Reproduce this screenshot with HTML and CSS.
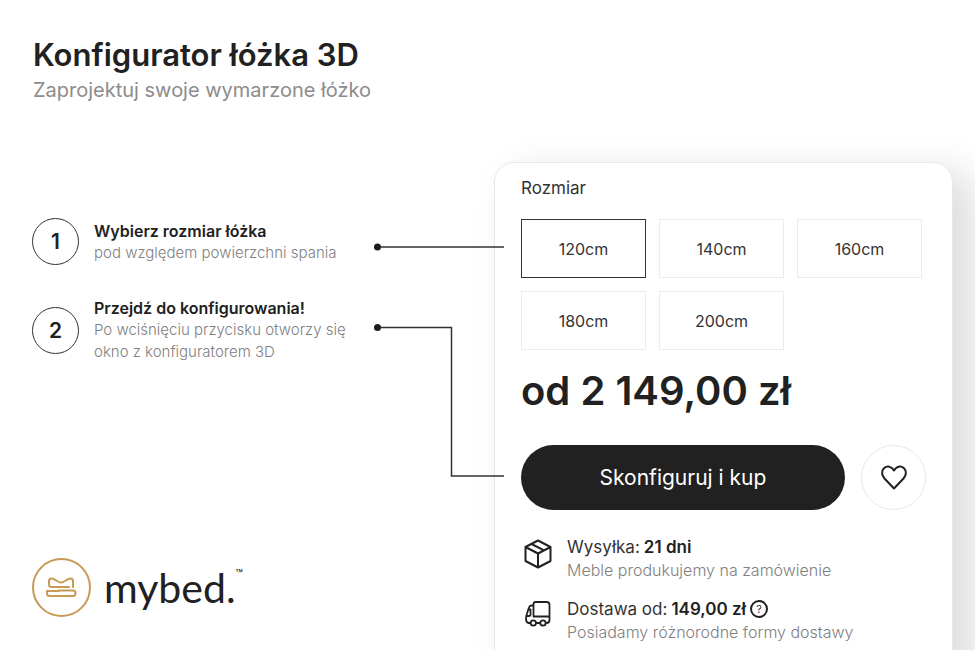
FILE: index.html
```html
<!DOCTYPE html>
<html lang="pl">
<head>
<meta charset="utf-8">
<meta name="viewport" content="width=device-width, initial-scale=1">
<title>Konfigurator łóżka 3D</title>
<link rel="stylesheet" href="styles.css">
</head>
<body>
<div class="page">
  <header class="header">
    <h1 class="title">Konfigurator łóżka 3D</h1>
    <p class="subtitle">Zaprojektuj swoje wymarzone łóżko</p>
  </header>
  <main class="content">
    <section class="guide">
      <ol class="steps">
        <li class="step">
          <span class="step-number">1</span>
          <div>
            <h2 class="step-title">Wybierz rozmiar łóżka</h2>
            <p class="step-text">pod względem powierzchni spania</p>
          </div>
        </li>
        <li class="step">
          <span class="step-number">2</span>
          <div>
            <h2 class="step-title">Przejdź do konfigurowania!</h2>
            <p class="step-text">Po wciśnięciu przycisku otworzy się<br>okno z konfiguratorem 3D</p>
          </div>
        </li>
      </ol>
      <div class="brand">
        <svg class="brand-mark" viewBox="0 0 60 60" fill="none" stroke="#c79a55" stroke-width="2" stroke-linecap="round" stroke-linejoin="round" aria-hidden="true">
          <circle cx="29.500" cy="29.500" r="28.5"/>
          <path d="M37 29H19.500Q17 29 17 26.500V23Q17 20.500 19.500 20.500C23 20.500 25.500 24.500 29 24.500C32.500 24.500 35 20.500 38.500 20.500Q41 20.500 41 23V29M27 32.500H41Q43.500 32.500 43.500 35.200Q43.500 38 41 38H17.500Q15 38 15 35.500V33H27"/>
        </svg>
        <span class="brand-name">mybed.</span><span class="brand-tm">™</span>
      </div>
    </section>
    <section class="card">
      <fieldset class="sizes">
        <legend class="sizes-label">Rozmiar</legend>
        <div class="size-grid">
          <button type="button" class="size selected" aria-pressed="true">120cm</button>
          <button type="button" class="size">140cm</button>
          <button type="button" class="size">160cm</button>
          <button type="button" class="size">180cm</button>
          <button type="button" class="size">200cm</button>
        </div>
      </fieldset>
      <p class="price">od 2 149,00 zł</p>
      <div class="actions">
        <button type="button" class="buy">Skonfiguruj i kup</button>
        <button type="button" class="favourite" aria-label="Dodaj do ulubionych">
          <svg width="28" height="26" viewBox="0 0 28 26" fill="none" stroke="#212121" stroke-width="2" stroke-linejoin="round"><path d="M14 23.500L4.500 13.500C1.500 10.200 1.300 5.800 4 3.300C7 .5 11.500 1 14 5.500C16.500 1 21 .5 24 3.300C26.700 5.800 26.500 10.200 23.500 13.500Z"/></svg>
        </button>
      </div>
      <ul class="facts">
        <li class="fact">
          <svg class="fact-icon" viewBox="0 0 28 30" fill="none" stroke="#212121" stroke-width="2" stroke-linejoin="round" aria-hidden="true"><path d="M14 1.500L26.500 8V22L14 28.500L1.500 22V8ZM1.500 8L14 14.500L26.500 8M14 14.500V28.500M7.500 5L20 11.400"/></svg>
          <div>
            <p class="fact-title">Wysyłka: <b>21 dni</b></p>
            <p class="fact-text">Meble produkujemy na zamówienie</p>
          </div>
        </li>
        <li class="fact">
          <svg class="fact-icon" viewBox="0 0 28 30" fill="none" stroke="#212121" stroke-width="1.800" stroke-linejoin="round" stroke-linecap="round" aria-hidden="true"><path d="M9.500 15.500V3Q9.500 1 11.500 1H22.500Q25.500 1 25.500 4V15.500ZM9.500 4.500H7.500Q5.500 4.500 5 6.500L3 12.500Q2 15 2 18Q2 21.500 4.500 22H6M25.500 15.500V19Q25.500 22 22.500 22M12.500 22H15.500M3 15H5Q6.500 15 6.500 13.500V8.500H5"/><circle cx="9.300" cy="22" r="2.700"/><circle cx="19" cy="22" r="2.700"/></svg>
          <div>
            <p class="fact-title">Dostawa od: <b>149,00 zł</b><button type="button" class="help" aria-label="Informacje o dostawie">?</button></p>
            <p class="fact-text">Posiadamy różnorodne formy dostawy</p>
          </div>
        </li>
      </ul>
    </section>
    <svg class="connectors" width="132" height="240" viewBox="0 0 132 240" fill="none" stroke="#333" stroke-width="1.500" aria-hidden="true">
      <path d="M4 7H131M4 87.500H78.500V236H131"/>
      <circle cx="4.500" cy="7" r="3.500" fill="#1d1d1b" stroke="none"/>
      <circle cx="4.500" cy="87.500" r="3.500" fill="#1d1d1b" stroke="none"/>
    </svg>
  </main>
</div>
</body>
</html>
```
FILE: styles.css
```css
* { box-sizing: border-box; }
body {
  margin: 0;
  background: #fff;
  color: #212121;
  font-family: Inter, "Noto Sans", sans-serif;
}
h1, h2, p, ol, ul { margin: 0; padding: 0; }
ol, ul { list-style: none; }
button { font-family: inherit; color: inherit; padding: 0; cursor: pointer; }

.page {
  display: grid;
  grid-template-rows: auto minmax(0, 1fr);
  height: 100vh;
  overflow: hidden;
}
.header { padding: 34px 33px 58px; }
.title { font-size: 31px; line-height: 42px; font-weight: 600; }
.subtitle { font-size: 20px; line-height: 28px; font-weight: 400; color: #8c8c8c; }

.content {
  position: relative;
  display: grid;
  grid-template-columns: minmax(0, 1fr) minmax(0, 1fr);
  grid-template-rows: minmax(0, 1fr);
  gap: 3px;
  padding: 0 22px 0 32px;
}
.guide {
  display: flex;
  flex-direction: column;
  justify-content: space-between;
  padding: 56px 0 32px;
}
.steps { display: grid; gap: 32px; }
.step { display: flex; align-items: center; gap: 15px; }
.step-number {
  display: grid;
  place-items: center;
  flex: none;
  width: 47px;
  height: 47px;
  border: 1px solid #333;
  border-radius: 50%;
  font-size: 21px;
  font-weight: 600;
}
.step-title { font-size: 16px; line-height: 22px; font-weight: 600; }
.step-text { font-size: 15px; line-height: 22px; font-weight: 300; color: #808080; }

.brand { display: flex; align-items: center; }
.brand-mark { width: 60px; height: 60px; margin-right: 12px; }
.brand-name { font-family: Lato, sans-serif; font-size: 41px; line-height: 54px; }
.brand-tm { align-self: flex-start; margin-top: 8px; font-size: 12px; }

.card {
  align-self: start;
  padding: 14px 26px 40px;
  border: 1px solid #e8e8e8;
  border-radius: 20px;
  background: #fff;
  box-shadow: 20px 10px 40px rgba(0, 0, 0, 0.14);
}
.sizes { margin: 0 4px 0 0; padding: 0; border: 0; min-width: 0; }
.sizes-label { padding: 0; font-size: 17px; line-height: 22px; color: #333; }
.size-grid {
  display: grid;
  grid-template-columns: repeat(3, minmax(0, 1fr));
  gap: 13px;
  padding-top: 20px;
}
.size {
  height: 59px;
  border: 1px solid #ececec;
  background: #fff;
  color: #333;
  font-size: 16px;
}
.size.selected { border-color: #333; }
.price { margin-top: 14px; font-size: 40px; line-height: 54px; font-weight: 600; }
.actions { display: flex; gap: 16px; margin-top: 27px; }
.buy {
  flex: 1;
  height: 65px;
  border: 0;
  border-radius: 33px;
  background: #212121;
  color: #fff;
  font-size: 21px;
}
.favourite {
  display: grid;
  place-items: center;
  width: 65px;
  height: 65px;
  border: 1px solid #e8e8e8;
  border-radius: 50%;
  background: #fff;
}
.facts { display: grid; gap: 15px; margin-top: 25px; }
.fact { display: flex; gap: 15px; }
.fact-icon { flex: none; width: 28px; height: 30px; margin: 4px 0 0 3px; }
.fact-title { display: flex; align-items: center; gap: 4px; font-size: 17px; line-height: 24px; color: #333; }
.fact-title b { font-weight: 600; color: #212121; }
.fact-text { font-size: 16px; line-height: 23px; font-weight: 300; color: #808080; }
.help {
  width: 18px;
  height: 18px;
  border: 2px solid #212121;
  border-radius: 50%;
  background: #fff;
  font-size: 11px;
  line-height: 14px;
}
.connectors { position: absolute; top: 78px; right: calc(50% - 17px); }
```
